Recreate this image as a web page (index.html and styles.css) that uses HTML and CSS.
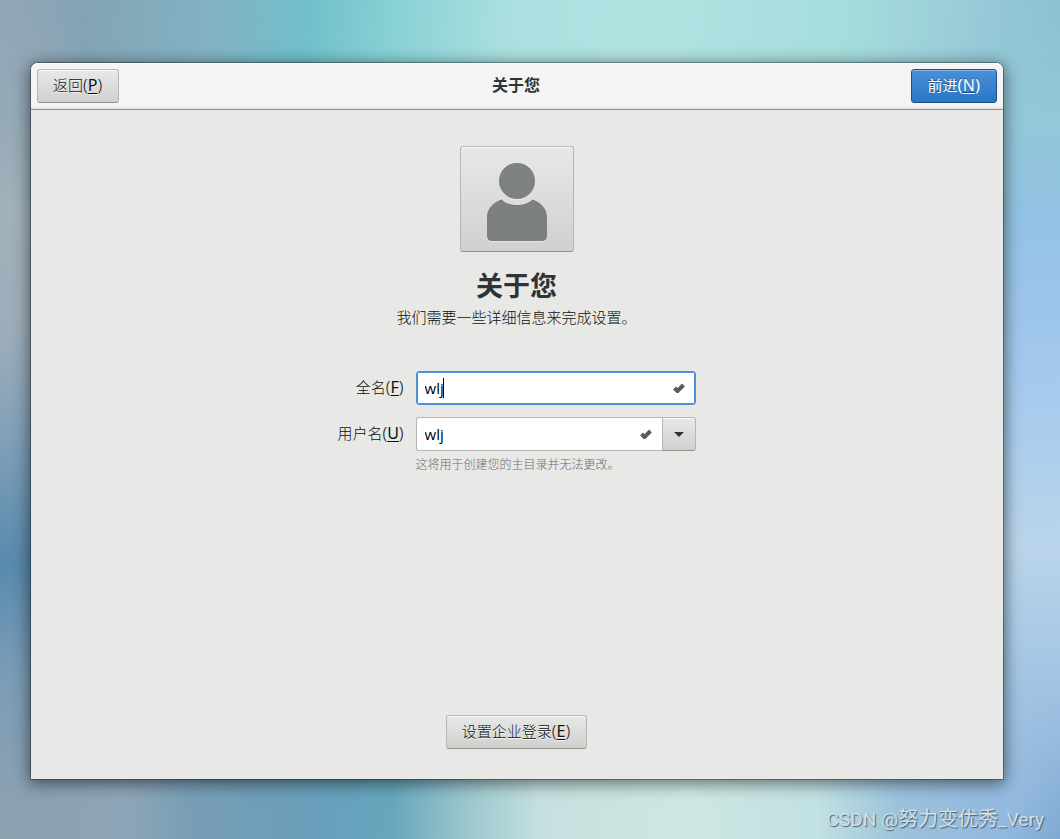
FILE: index.html
```html
<!DOCTYPE html>
<html lang="zh-CN">
<head>
<meta charset="utf-8">
<title>关于您</title>
<link rel="stylesheet" href="styles.css">
</head>
<body class="desktop">
<section class="window">
  <header class="headerbar">
    <button class="button" type="button" accesskey="p">返回<span class="mnemonic">(<u>P</u>)</span></button>
    <div class="headerbar-title">关于您</div>
    <button class="button button-suggested" type="button" accesskey="n">前进<span class="mnemonic">(<u>N</u>)</span></button>
  </header>
  <main class="page">
    <button class="button avatar" type="button" aria-label="头像">
      <svg class="avatar-icon" viewBox="0 0 60 79" width="60" height="79" aria-hidden="true">
        <circle cx="30" cy="18" r="18"/>
        <path d="M14.500 36.500 C18.500 40.500 23.500 42 30 42 C36.500 42 41.500 40.500 45.500 36.500 C53.500 39.500 60 45.500 60 54 V73 Q60 78 55 78 H5 Q0 78 0 73 V54 C0 45.500 6.500 39.500 14.500 36.500 Z"/>
      </svg>
    </button>
    <h1 class="title">关于您</h1>
    <p class="subtitle">我们需要一些详细信息来完成设置。</p>
    <form class="form">
      <label class="label label-first" for="fullname">全名<span class="mnemonic">(<u>F</u>)</span></label>
      <div class="entry entry-focused">
        <input class="input" id="fullname" type="text" value="wlj">
        <span class="caret"></span>
        <svg class="check" viewBox="0 0 12 10" width="12" height="10" aria-hidden="true"><path d="M1.500 5 L4.500 8 L10.500 2"/></svg>
      </div>
      <label class="label" for="username">用户名<span class="mnemonic">(<u>U</u>)</span></label>
      <div class="combo">
        <div class="entry entry-linked">
          <input class="input" id="username" type="text" value="wlj">
          <svg class="check" viewBox="0 0 12 10" width="12" height="10" aria-hidden="true"><path d="M1.500 5 L4.500 8 L10.500 2"/></svg>
        </div>
        <button class="button combo-button" type="button" aria-label="选择用户名">
          <svg viewBox="0 0 10 5" width="10" height="5" aria-hidden="true"><path d="M0 0H10L5 5Z" fill="#2e3436"/></svg>
        </button>
      </div>
      <p class="hint">这将用于创建您的主目录并无法更改。</p>
    </form>
    <button class="button enterprise" type="button" accesskey="e">设置企业登录<span class="mnemonic">(<u>E</u>)</span></button>
  </main>
</section>
<div class="watermark">CSDN @<span class="watermark-name">努力变优秀</span>_Very</div>
</body>
</html>
```

FILE: styles.css
```css
* { box-sizing: border-box; }

.desktop {
  margin: 0;
  min-height: 100vh;
  padding: 63px 57px 60px 31px;
  display: flex;
  position: relative;
  isolation: isolate;
  font-family: "Noto Sans", "Noto Sans CJK SC", sans-serif;
  font-size: 15px;
  font-weight: 300;
  line-height: 20px;
  color: #0c1011;
  background-color: #8fb0c4;
  background-image:
    linear-gradient(95deg, #94a6b8 0, #84a4b5 8%, #82b3c4 20%, #70bfc9 28%, #88d1d5 36%, #ace0e0 47%, #b1e3e2 60%, #a4dcdc 78%, #96c9d8 90%, #88bfcc 100%),
    linear-gradient(90deg, #8da2af 0, #8da5b8 12%, #789eb5 18%, #689fbb 30%, #66a7bd 37%, #9bc7ce 44%, #c5e0df 51%, #cee7e2 65%, #c2e1e2 77%, #9ac2dc 85%, #91b8de 95%, #80aad3 100%);
  background-size: 100% 50%;
  background-position: left top, left bottom;
  background-repeat: no-repeat;
}

.desktop::before,
.desktop::after {
  content: "";
  position: absolute;
  top: 0;
  bottom: 0;
  width: 90px;
  z-index: -1;
}

.desktop::before {
  left: 0;
  background: linear-gradient(to bottom, rgba(142, 165, 182, 0) 0, #96a9b6 14%, #a0b2bb 25%, #9cadba 40%, #82a0b8 52%, #588aae 67%, #7a9cb6 80%, #8aa1b3 94%, rgba(142, 165, 182, 0) 100%);
  mask-image: linear-gradient(to right, #000 30%, transparent);
}

.desktop::after {
  right: 0;
  background: linear-gradient(to bottom, rgba(145, 202, 214, 0) 0, #92c8d8 15%, #92c2e4 25%, #9dc5ea 37%, #a6caee 47%, #bad5ea 65%, #a5c5e4 80%, rgba(145, 184, 220, 0) 100%);
  mask-image: linear-gradient(to left, #000 50%, transparent);
}

.window {
  flex: 1;
  display: flex;
  flex-direction: column;
  background: #e8e8e6;
  border-radius: 7px 7px 0 0;
  box-shadow: 0 0 0 1px rgba(0, 0, 0, 0.3), 0 3px 16px 2px rgba(0, 0, 0, 0.5);
}

.headerbar {
  display: grid;
  grid-template-columns: 1fr auto 1fr;
  align-items: center;
  padding: 6px;
  background: linear-gradient(to top, #dededc 0, #f4f4f4 3px);
  border-bottom: 1px solid #949490;
  border-radius: 7px 7px 0 0;
  box-shadow: inset 0 1px #ffffff;
}

.headerbar > .button { justify-self: start; }
.headerbar > .button-suggested { justify-self: end; }

.headerbar-title {
  padding: 0 2px 2px 0;
  font-size: 16px;
  font-weight: 700;
  color: #2e3436;
}

.button {
  height: 34px;
  margin: 0;
  padding: 0 16px 2px 15px;
  font: inherit;
  color: #0c1011;
  text-shadow: 0 1px rgba(255, 255, 255, 0.77);
  background: linear-gradient(to bottom, #e8e8e6, #d0d0ce);
  border: 1px solid #b6b6b3;
  border-bottom-color: #91918c;
  border-radius: 3px;
  box-shadow: inset 0 1px rgba(255, 255, 255, 0.8);
}

.button-suggested {
  padding-left: 16px;
  color: #ffffff;
  font-weight: 400;
  text-shadow: 0 -1px rgba(0, 0, 0, 0.4);
  background: linear-gradient(to bottom, #4a90d9, #2a76c6);
  border-color: #1c5187;
  box-shadow: inset 0 1px rgba(255, 255, 255, 0.35);
}

.mnemonic {
  font-size: 17px;
}

.mnemonic u {
  font-size: 16px;
  font-weight: 400;
  text-decoration-thickness: 1px;
  text-underline-offset: 2px;
}

.page {
  flex: 1;
  display: flex;
  flex-direction: column;
  align-items: center;
  padding: 36px 31px 30px 30px;
}

.avatar {
  display: flex;
  align-items: center;
  justify-content: center;
  width: 114px;
  height: 106px;
  padding: 6px 0 0;
}

.avatar-icon {
  fill: #2e3436;
  fill-opacity: 0.58;
  filter: drop-shadow(0 1px rgba(255, 255, 255, 0.7));
}

.title {
  margin: 16px 0 0;
  font-size: 27px;
  line-height: 36px;
  font-weight: 700;
  color: #2e3436;
}

.subtitle { margin: 3px 0 0; }

.form {
  display: grid;
  grid-template-columns: auto 280px;
  align-items: center;
  column-gap: 12px;
  margin-top: 44px;
}

.label {
  padding-bottom: 2px;
  text-align: right;
}

.label-first,
.entry-focused {
  margin-bottom: 12px;
}

.entry {
  display: flex;
  align-items: center;
  height: 34px;
  padding: 0 10px 0 8px;
  background: #ffffff;
  border: 1px solid #b6b6b3;
  border-radius: 3px;
  position: relative;
}

.entry-focused {
  border-color: #4a90d9;
  box-shadow: inset 0 0 0 1px #4a90d9;
}

.entry-linked {
  flex: 1;
  border-right: 0;
  border-radius: 3px 0 0 3px;
}

.input {
  flex: 1;
  min-width: 0;
  padding: 0;
  border: 0;
  outline: 0;
  background: transparent;
  font: inherit;
  font-family: "Open Sans", sans-serif;
  font-weight: 400;
  color: #000000;
}

.caret {
  position: absolute;
  left: 26px;
  top: 6px;
  width: 1px;
  height: 20px;
  background: #000000;
}

.check {
  fill: none;
  stroke: #575c5e;
  stroke-width: 4;
}

.combo { display: flex; }

.combo-button {
  display: flex;
  flex: none;
  align-items: center;
  justify-content: center;
  width: 34px;
  padding: 0;
  border-radius: 0 3px 3px 0;
}

.hint {
  grid-column: 2;
  margin: 4px 0 0;
  font-size: 12px;
  color: #686c6d;
}

.enterprise { margin-top: auto; }

.watermark {
  position: absolute;
  right: 16px;
  bottom: 7px;
  font-family: Roboto, "Noto Sans CJK SC", sans-serif;
  font-size: 19px;
  font-weight: 400;
  line-height: 24px;
  color: #d3e0e8;
  text-shadow: 1px 1px 1px rgba(50, 70, 85, 0.8);
}

.watermark-name { font-size: 20px; }
```
